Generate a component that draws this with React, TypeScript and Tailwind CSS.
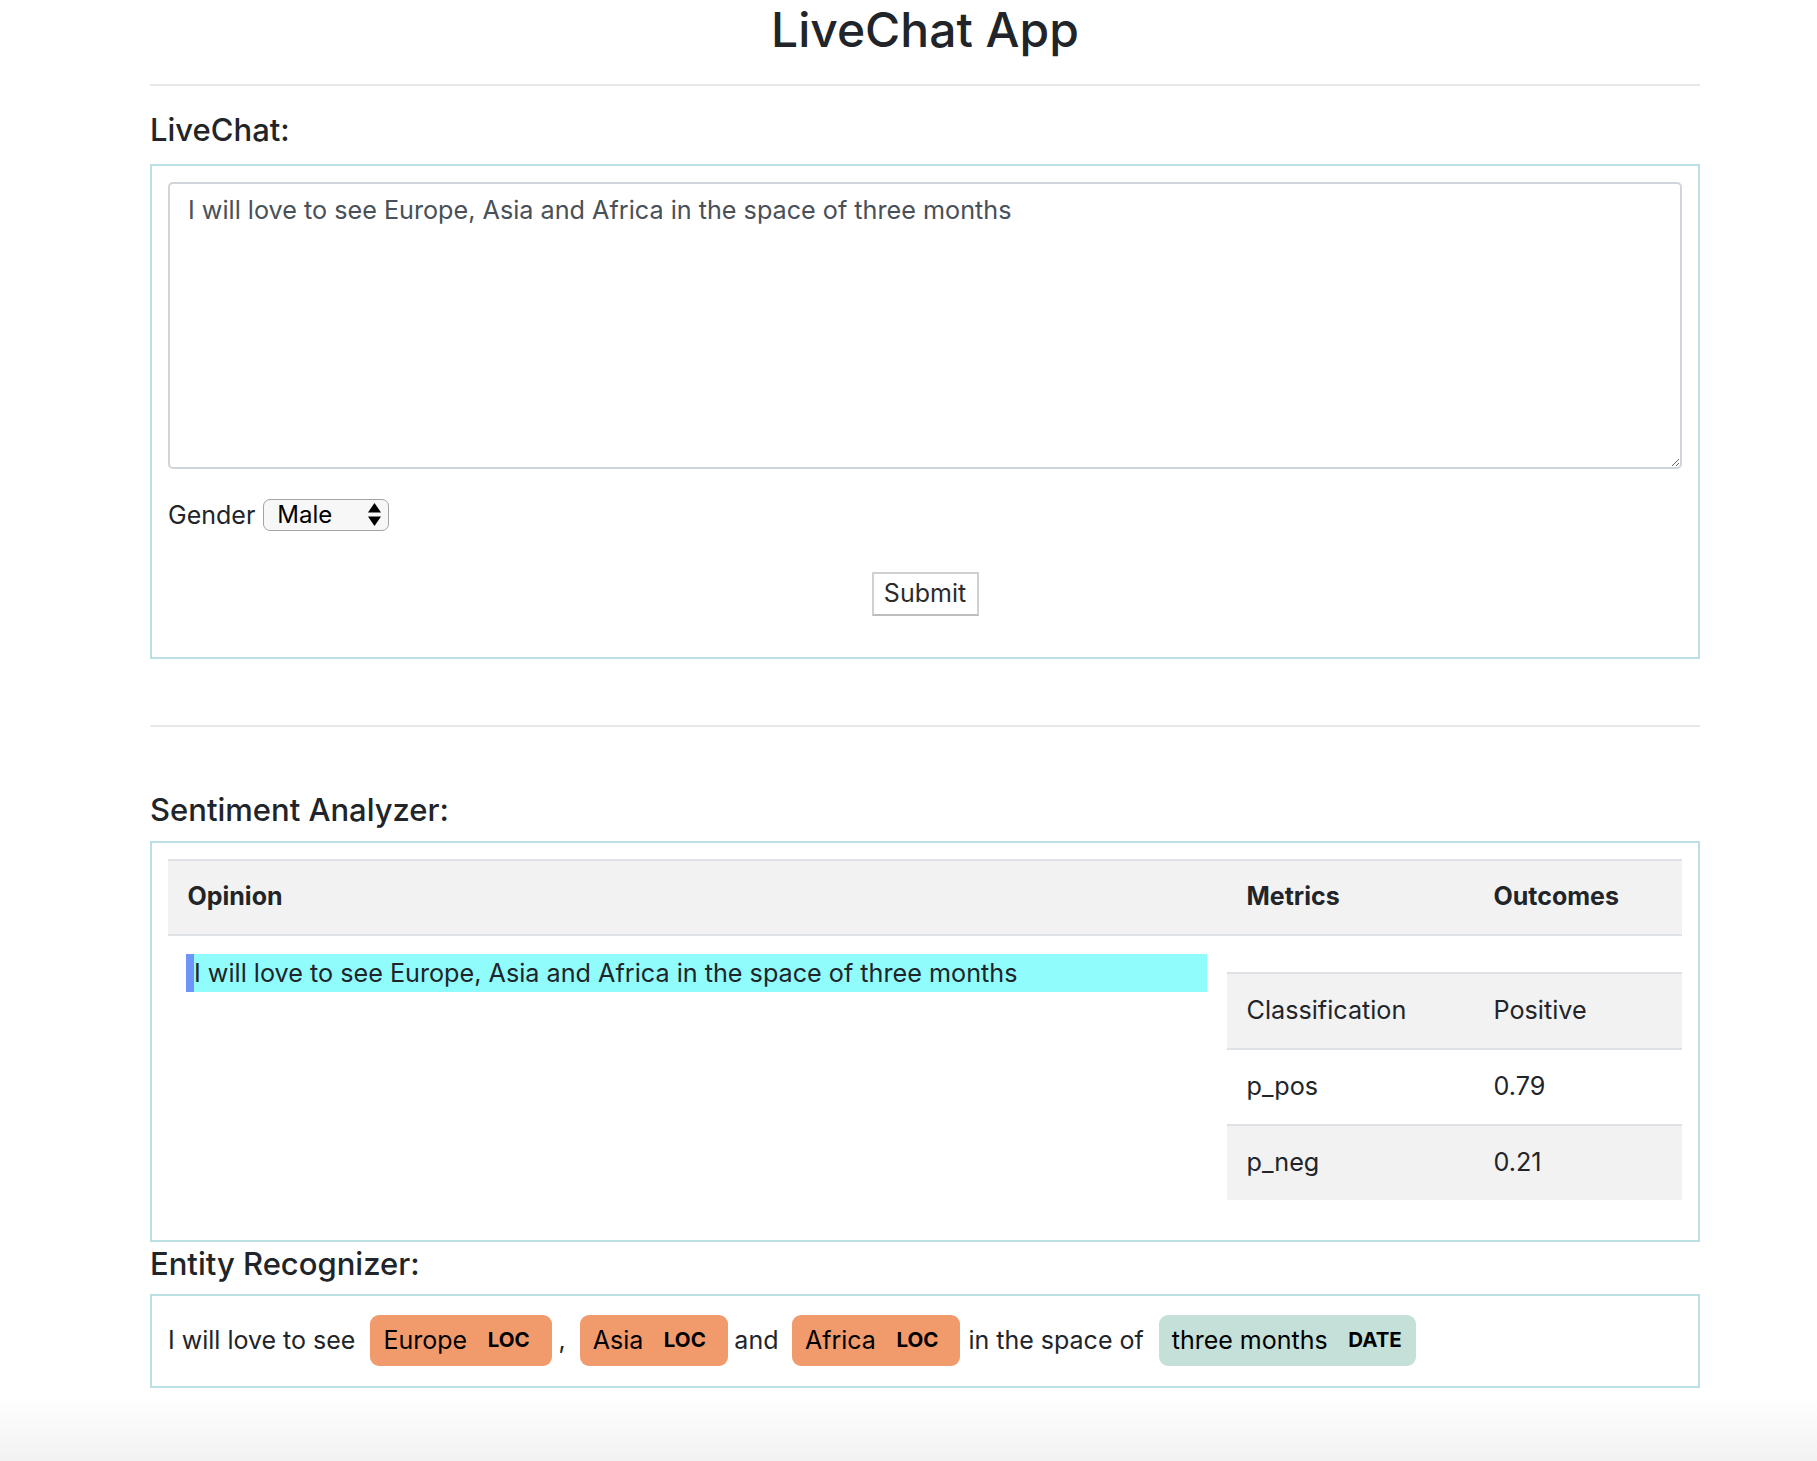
const sentence = 'I will love to see Europe, Asia and Africa in the space of three months';

interface MarkProps {
  text: string;
  label: string;
  color: string;
  className?: string;
}

function EntityMark({ text, label, color, className = '' }: MarkProps) {
  return (
    <mark
      className={`inline-flex h-[51px] items-center rounded-[9px] pl-[13px] text-[25px] text-black ${color} ${className}`}
    >
      {text}
      <span className="ml-[20.5px] text-[20.5px] font-bold leading-none">{label}</span>
    </mark>
  );
}

const metrics = [
  { name: 'Classification', value: 'Positive', shaded: true },
  { name: 'p_pos', value: '0.79', shaded: false },
  { name: 'p_neg', value: '0.21', shaded: true },
];

export default function App() {
  return (
    <div className="flex h-[1461px] flex-col bg-white font-['Inter',sans-serif] text-[#212529]">
      <div className="ml-[150px] w-[1550px]">
        <h1 className="mt-[1px] text-center text-[48px] font-medium leading-[58px]">LiveChat App</h1>
        <hr className="mt-[25px] border-0 border-t-2 border-[#e8e8e8]" />

        <h5 className="mt-[25px] text-[31px] font-medium leading-[37px]">LiveChat:</h5>
        <section className="mt-[16px] border-2 border-[#bcdfe4] p-4">
          <textarea
            className="block h-[287px] w-full rounded-[5px] border-2 border-[#cfd5db] px-[18px] pt-[8px] text-[25.2px] leading-[37.5px] text-[#495057] outline-none"
            defaultValue={sentence}
          />
          <div className="mt-[29.5px] flex h-[32px] items-center gap-[8px]">
            <label className="text-[25px] leading-[32px]">Gender</label>
            <div className="relative">
              <select className="h-[32px] w-[126px] appearance-none rounded-[7px] border-[1.5px] border-[#a3a3a3] bg-[#f7f7f7] pl-[13px] text-[24px] leading-[29px] text-black outline-none">
                <option>Male</option>
                <option>Female</option>
              </select>
              <svg
                className="pointer-events-none absolute right-[8px] top-[4px] h-[23px] w-[13px]"
                viewBox="0 0 13 23"
                fill="#000"
              >
                <path d="M6.5 0 L13 9.5 H0 Z" />
                <path d="M0 13.5 H13 L6.5 23 Z" />
              </svg>
            </div>
          </div>
          <div className="mb-[24.5px] mt-[41.5px] flex justify-center">
            <button className="h-[44px] w-[107px] border-2 border-[#d0d0d0] border-b-[#bdbdbd] bg-white text-[25px] text-[#2b2b2b]">
              Submit
            </button>
          </div>
        </section>

        <hr className="mt-[66px] border-0 border-t-2 border-[#e8e8e8]" />

        <h5 className="mt-[64px] text-[31px] font-medium leading-[37px]">Sentiment Analyzer:</h5>
        <section className="mt-[13px] border-2 border-[#bcdfe4] p-4">
          <div className="grid h-[77px] grid-cols-[1059px_247px_1fr] items-center border-y-2 border-[#dee2e6] bg-[#f2f2f2] text-[25px] font-bold">
            <div className="px-[19.5px]">Opinion</div>
            <div className="px-[19.5px]">Metrics</div>
            <div className="px-[19.5px]">Outcomes</div>
          </div>
          <div className="grid grid-cols-[1059px_1fr] text-[25.2px]">
            <div className="pl-[18px] pr-[20px] pt-[18px]">
              <div className="border-l-[8px] border-[#6f93f6] bg-[#90fcfc] leading-[38.5px]">{sentence}</div>
            </div>
            <div className="pb-[24px] pt-[36px]">
              {metrics.map((m) => (
                <div
                  key={m.name}
                  className={`grid h-[76px] grid-cols-[247px_1fr] items-center border-t-2 border-[#dee2e6] ${m.shaded ? 'bg-[#f2f2f2]' : 'bg-white'}`}
                >
                  <div className="px-[19.5px]">{m.name}</div>
                  <div className="px-[19.5px]">{m.value}</div>
                </div>
              ))}
            </div>
          </div>
        </section>

        <h5 className="mt-[3px] text-[31px] font-medium leading-[37px]">Entity Recognizer:</h5>
        <section className="mt-[12px] border-2 border-[#bcdfe4] px-4 py-[18px]">
          <div className="flex h-[54px] items-center whitespace-pre text-[25px]">
            <span>I will love to see</span>
            <EntityMark text="Europe" label="LOC" color="bg-[#f19b6d]" className="ml-[15px] pr-[22px]" />
            <span className="ml-[7px]">,</span>
            <EntityMark text="Asia" label="LOC" color="bg-[#f19b6d]" className="ml-[14px] pr-[22px]" />
            <span className="ml-[6.5px]">and</span>
            <EntityMark text="Africa" label="LOC" color="bg-[#f19b6d]" className="ml-[13.5px] pr-[22px]" />
            <span className="ml-[8px]">in the space of</span>
            <EntityMark text="three months" label="DATE" color="bg-[#c5e0d9]" className="ml-[15px] pr-[14px]" />
          </div>
        </section>
      </div>
      <div className="mt-[8px] flex-1 bg-linear-to-b from-white to-[#f2f2f2]" />
    </div>
  );
}
